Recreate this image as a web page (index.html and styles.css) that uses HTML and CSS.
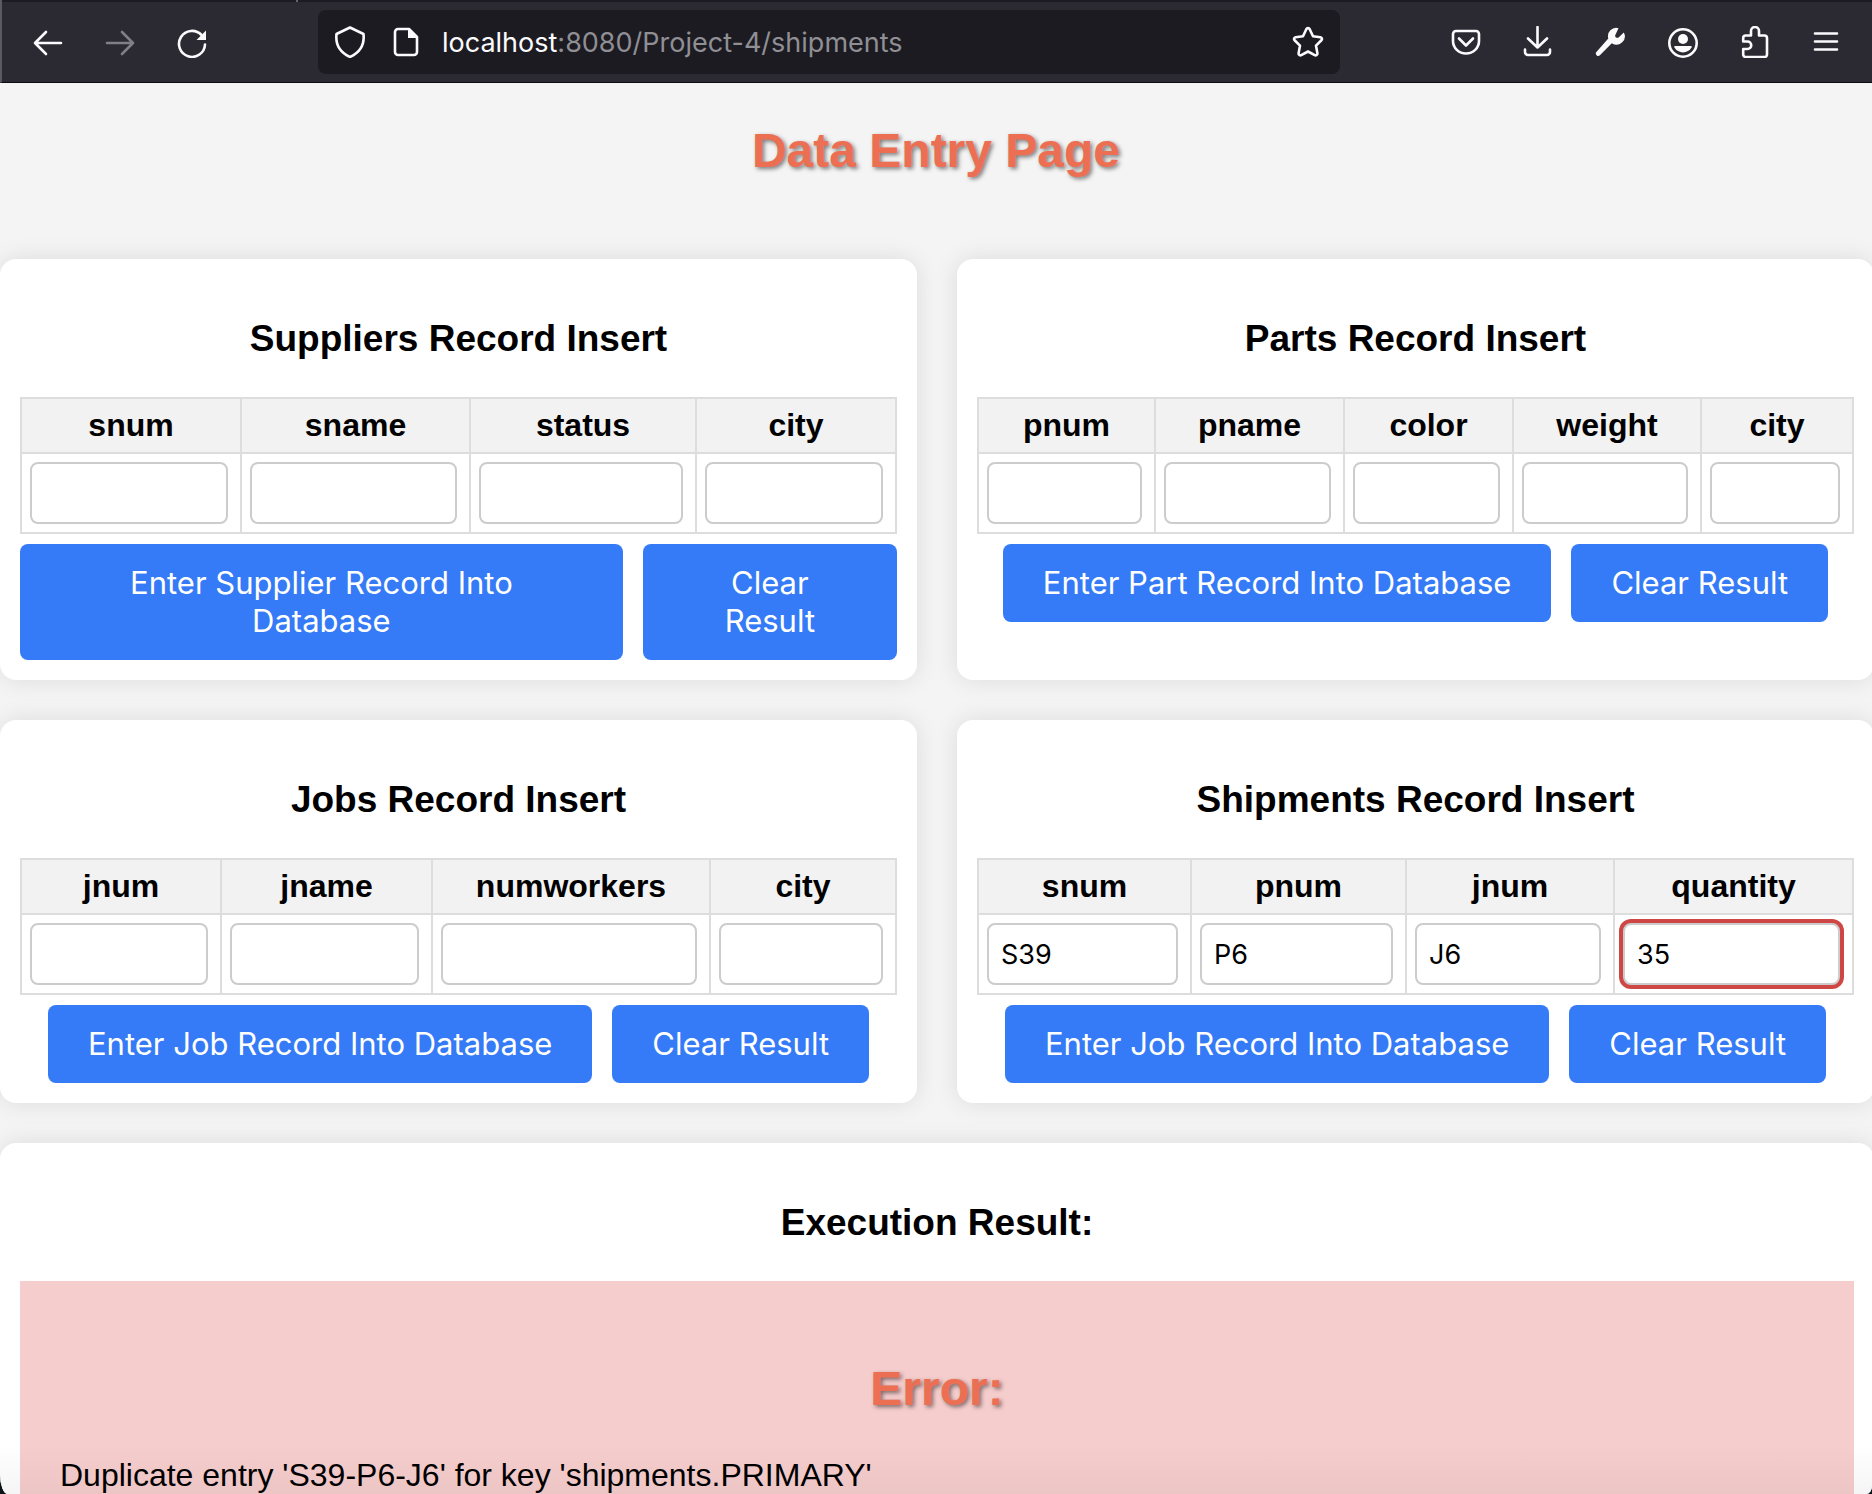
FILE: index.html
```html
<!DOCTYPE html>
<html lang="en">
<head>
<meta charset="utf-8">
<title>Data Entry Page</title>
<link rel="stylesheet" href="styles.css">
</head>
<body>
<div class="window">
  <header class="browser">
    <div class="tab-strip"><span class="tab-divider"></span></div>
    <div class="toolbar">
      <nav class="tool-group" aria-label="Navigation">
        <button class="tool" type="button" aria-label="Back"><svg class="icon" viewBox="0 0 32 32"><path d="M29 17H3M14 6L3 17l11 11"/></svg></button>
        <button class="tool tool-off" type="button" aria-label="Forward" disabled><svg class="icon" viewBox="0 0 32 32"><path d="M3 17h26M18 6l11 11-11 11"/></svg></button>
        <button class="tool" type="button" aria-label="Reload"><svg class="icon" viewBox="0 0 32 32"><path d="M29 18.500A13 13 0 1 1 25.500 9"/><path class="solid" d="M30 4.500V14h-9.500z"/></svg></button>
      </nav>
      <div class="address">
        <div class="site-info">
          <svg class="icon" viewBox="0 0 32 32"><path d="M16 1.500L29.500 8c1 9-2.500 18-13.500 23C5 26 1.500 17 2.500 8z"/></svg>
          <svg class="icon" viewBox="0 0 32 32"><path d="M19 3H8a3 3 0 0 0-3 3v20a3 3 0 0 0 3 3h16a3 3 0 0 0 3-3V11z"/><path class="solid" d="M18 3v9h9z"/></svg>
        </div>
        <p class="url"><span class="url-host">localhost</span>:8080/Project-4/shipments</p>
        <button class="star" type="button" aria-label="Bookmark this page"><svg class="icon" viewBox="0 0 32 32"><path d="M14.300 3.200a1.900 1.900 0 0 1 3.400 0l3.300 7 7.400 1a1.800 1.800 0 0 1 1 3.100l-5.400 5.300 1.400 7.600a1.900 1.900 0 0 1-2.700 2L16 25.500l-6.700 3.700a1.900 1.900 0 0 1-2.700-2L8 19.600l-5.400-5.300a1.800 1.800 0 0 1 1-3.100l7.400-1z"/></svg></button>
      </div>
      <div class="tool-group">
        <button class="tool" type="button" aria-label="Save to Pocket"><svg class="icon" viewBox="0 0 32 32"><path d="M6 5h20a3 3 0 0 1 3 3v7a13 12.500 0 0 1-26 0V8a3 3 0 0 1 3-3z"/><path d="M9 12.500l7 7 7-7"/></svg></button>
        <button class="tool" type="button" aria-label="Downloads"><svg class="icon" viewBox="0 0 32 32"><path d="M15.500 1v20M6 12.500l9.500 9 9.500-9M3 23.500V26a3 3 0 0 0 3 3h19a3 3 0 0 0 3-3v-2.500"/></svg></button>
        <button class="tool" type="button" aria-label="Developer tools"><svg class="icon" viewBox="0 0 32 32"><path class="solid" d="M24.500 2.200A8.300 8.300 0 0 0 14.300 12.500L2.600 25.800a2.300 2.300 0 0 0 3.300 3.400L17.800 17.200A8.300 8.300 0 0 0 29.800 6.500L24.600 11.400q-1.800 1-2.900-.2-1.100-1.300 0-2.900z"/></svg></button>
        <button class="tool" type="button" aria-label="Account"><svg class="icon" viewBox="0 0 32 32"><circle cx="17" cy="17" r="13.700"/><circle class="solid" cx="17" cy="13" r="5"/><path class="solid" d="M9.200 20h15.600c1 0 1.300.7.800 1.500a10 10 0 0 1-17.200 0C7.900 20.700 8.200 20 9.200 20z"/></svg></button>
        <button class="tool" type="button" aria-label="Extensions"><svg class="icon" viewBox="0 0 32 32"><path d="M5.200 15.500V12a2.500 2.500 0 0 1 2.500-2.500H13V5a4 4 0 0 1 8 0v4.500h5.500A2.500 2.500 0 0 1 29 12v16.500a2.500 2.500 0 0 1-2.500 2.500H7.700a2.500 2.500 0 0 1-2.500-2.500v-5.500h4.300a3.700 3.700 0 0 0 0-7.500z"/></svg></button>
        <button class="tool" type="button" aria-label="Open menu"><svg class="icon" viewBox="0 0 32 32"><path d="M5 7.500h22M5 15.500h22M5 23.500h22"/></svg></button>
      </div>
    </div>
  </header>

  <main class="page">
    <h1 class="title">Data Entry Page</h1>
    <div class="cards">
      <form class="card">
        <h3 class="card-title">Suppliers Record Insert</h3>
        <table class="record suppliers">
          <thead><tr><th id="s-snum">snum</th><th id="s-sname">sname</th><th id="s-status">status</th><th id="s-city">city</th></tr></thead>
          <tbody><tr>
            <td><input class="field" type="text" aria-labelledby="s-snum"></td>
            <td><input class="field" type="text" aria-labelledby="s-sname"></td>
            <td><input class="field" type="text" aria-labelledby="s-status"></td>
            <td><input class="field" type="text" aria-labelledby="s-city"></td>
          </tr></tbody>
        </table>
        <div class="actions">
          <button class="btn" type="button">Enter Supplier Record Into Database</button>
          <button class="btn" type="button">Clear Result</button>
        </div>
      </form>

      <form class="card">
        <h3 class="card-title">Parts Record Insert</h3>
        <table class="record parts">
          <thead><tr><th id="p-pnum">pnum</th><th id="p-pname">pname</th><th id="p-color">color</th><th id="p-weight">weight</th><th id="p-city">city</th></tr></thead>
          <tbody><tr>
            <td><input class="field" type="text" aria-labelledby="p-pnum"></td>
            <td><input class="field" type="text" aria-labelledby="p-pname"></td>
            <td><input class="field" type="text" aria-labelledby="p-color"></td>
            <td><input class="field" type="text" aria-labelledby="p-weight"></td>
            <td><input class="field" type="text" aria-labelledby="p-city"></td>
          </tr></tbody>
        </table>
        <div class="actions">
          <button class="btn" type="button">Enter Part Record Into Database</button>
          <button class="btn" type="button">Clear Result</button>
        </div>
      </form>

      <form class="card">
        <h3 class="card-title">Jobs Record Insert</h3>
        <table class="record jobs">
          <thead><tr><th id="j-jnum">jnum</th><th id="j-jname">jname</th><th id="j-numworkers">numworkers</th><th id="j-city">city</th></tr></thead>
          <tbody><tr>
            <td><input class="field" type="text" aria-labelledby="j-jnum"></td>
            <td><input class="field" type="text" aria-labelledby="j-jname"></td>
            <td><input class="field" type="text" aria-labelledby="j-numworkers"></td>
            <td><input class="field" type="text" aria-labelledby="j-city"></td>
          </tr></tbody>
        </table>
        <div class="actions">
          <button class="btn" type="button">Enter Job Record Into Database</button>
          <button class="btn" type="button">Clear Result</button>
        </div>
      </form>

      <form class="card">
        <h3 class="card-title">Shipments Record Insert</h3>
        <table class="record shipments">
          <thead><tr><th id="h-snum">snum</th><th id="h-pnum">pnum</th><th id="h-jnum">jnum</th><th id="h-quantity">quantity</th></tr></thead>
          <tbody><tr>
            <td><input class="field" type="text" value="S39" aria-labelledby="h-snum"></td>
            <td><input class="field" type="text" value="P6" aria-labelledby="h-pnum"></td>
            <td><input class="field" type="text" value="J6" aria-labelledby="h-jnum"></td>
            <td><input class="field field-invalid" type="text" value="35" aria-invalid="true" aria-labelledby="h-quantity"></td>
          </tr></tbody>
        </table>
        <div class="actions">
          <button class="btn" type="button">Enter Job Record Into Database</button>
          <button class="btn" type="button">Clear Result</button>
        </div>
      </form>

      <section class="card card-wide">
        <h3 class="card-title">Execution Result:</h3>
        <div class="result">
          <h1 class="title">Error:</h1>
          <p class="message">Duplicate entry 'S39-P6-J6' for key 'shipments.PRIMARY'</p>
        </div>
      </section>
    </div>
  </main>
  <div class="edge-shade"></div>
</div>
</body>
</html>
```

FILE: styles.css
```css
* {
  box-sizing: border-box;
}

body {
  margin: 0;
  background: #0b1416;
  color: #000;
  font-family: "Liberation Sans", Arial, sans-serif;
  font-size: 32px;
  line-height: 37px;
}

.window {
  position: relative;
  height: 100vh;
  overflow: hidden;
  border-radius: 0 0 6px 8px / 0 0 8px 20px;
  background: #f4f4f4;
}

/* Browser chrome */
.browser {
  background: #2b2a33;
  border-left: 2px solid #5b5a62;
  border-bottom: 1px solid #0c0c0d;
}

.tab-strip {
  display: flex;
  height: 2px;
  padding-left: 294px;
  background: #1c1b22;
}

.tab-divider {
  width: 2px;
  background: #66656c;
}

.toolbar {
  display: flex;
  align-items: center;
  gap: 90px;
  height: 80px;
  padding: 0 10px;
}

.tool-group {
  display: flex;
}

.tool,
.star {
  display: flex;
  align-items: center;
  justify-content: center;
  padding: 0;
  border: 0;
  background: none;
  color: #fbfbfe;
}

.tool {
  width: 72px;
  height: 64px;
}

.tool-off {
  color: #807f85;
}

.icon {
  flex: none;
  width: 32px;
  height: 32px;
  fill: none;
  stroke: currentColor;
  stroke-width: 2.6;
  stroke-linecap: round;
  stroke-linejoin: round;
}

.icon .solid {
  fill: currentColor;
  stroke: none;
}

.address {
  display: flex;
  flex: 1;
  align-items: center;
  gap: 20px;
  height: 64px;
  padding: 0 16px;
  border-radius: 8px;
  background: #1c1b22;
  color: #fbfbfe;
}

.site-info {
  display: flex;
  gap: 24px;
}

.url {
  flex: 1;
  margin: 0;
  color: #8f8f94;
  font-family: Inter, sans-serif;
  font-size: 27px;
}

.url-host {
  color: #fbfbfe;
}

/* Page */
.title {
  margin: 40px 0;
  color: #ed6f53;
  font-size: 48px;
  line-height: 56px;
  text-align: center;
  text-shadow: 2px 2px 4px rgba(0, 0, 0, 0.5);
}

.cards {
  display: grid;
  grid-template-columns: 1fr 1fr;
  gap: 40px;
  padding-top: 40px;
}

.card {
  padding: 20px;
  border-radius: 16px;
  background: #fff;
  box-shadow: 0 0 24px rgba(0, 0, 0, 0.1);
}

.card-wide {
  grid-column: 1 / -1;
}

.card-title {
  margin: 38px 0 36px;
  font-size: 37px;
  line-height: 44px;
  text-align: center;
}

.record {
  width: 100%;
  border-collapse: collapse;
  table-layout: fixed;
}

.record th,
.record td {
  padding: 8px;
  border: 2px solid #ddd;
}

.record th {
  background: #f2f2f2;
}

.record td {
  line-height: 0;
}

.suppliers th:nth-child(1) { width: 220px; }
.suppliers th:nth-child(2) { width: 229px; }
.suppliers th:nth-child(3) { width: 226px; }
.suppliers th:nth-child(4) { width: 200px; }

.parts th:nth-child(1) { width: 177px; }
.parts th:nth-child(2) { width: 189px; }
.parts th:nth-child(3) { width: 169px; }
.parts th:nth-child(4) { width: 188px; }
.parts th:nth-child(5) { width: 152px; }

.jobs th:nth-child(1) { width: 200px; }
.jobs th:nth-child(2) { width: 211px; }
.jobs th:nth-child(3) { width: 278px; }
.jobs th:nth-child(4) { width: 186px; }

.shipments th:nth-child(1) { width: 213px; }
.shipments th:nth-child(2) { width: 215px; }
.shipments th:nth-child(3) { width: 208px; }
.shipments th:nth-child(4) { width: 239px; }

.field {
  width: calc(100% - 4px);
  height: 62px;
  padding: 0 12px;
  border: 2px solid #ccc;
  border-radius: 8px;
  background: #fff;
  color: #000;
  font-family: Inter, sans-serif;
  font-size: 27px;
}

.field-invalid {
  box-shadow: 0 0 0 4px #cf4745;
}

.actions {
  display: flex;
  align-items: flex-start;
  justify-content: center;
  gap: 20px;
  margin-top: 10px;
}

.btn {
  padding: 20px 40px;
  border: 0;
  border-radius: 8px;
  background: #357af6;
  color: #fff;
  font-family: Inter, sans-serif;
  font-size: 31px;
  line-height: 38px;
}

.result {
  padding: 40px;
  background: #f6cdcd;
}

.message {
  margin: 0 0 40px;
}

/* Shade along the bottom edge of the window */
.edge-shade {
  position: absolute;
  inset: auto 0 0;
  height: 50px;
  background: linear-gradient(transparent, rgba(0, 0, 0, 0.04));
}
```
